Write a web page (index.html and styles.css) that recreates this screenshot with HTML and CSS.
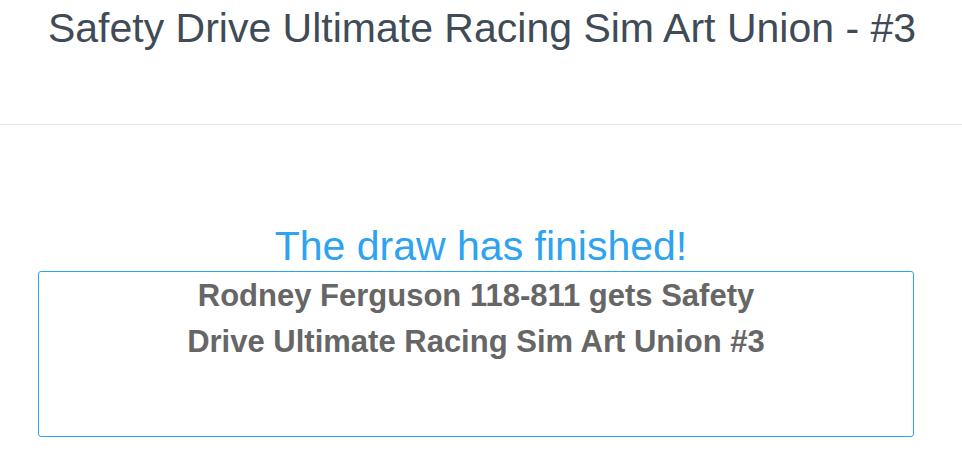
FILE: index.html
```html
<!DOCTYPE html>
<html>
<head>
<meta charset="utf-8">
<link rel="stylesheet" href="styles.css">
</head>
<body>
<header class="page-header">
  <h1 class="title">Safety Drive Ultimate Racing Sim Art Union - #3</h1>
</header>
<main class="content">
  <h2 class="status">The draw has finished!</h2>
  <div class="result-box">
    <h3 class="winner">Rodney Ferguson 118-811 gets Safety Drive Ultimate Racing Sim Art Union #3</h3>
  </div>
</main>
</body>
</html>
```
FILE: styles.css
```css
html, body {
  margin: 0;
  padding: 0;
  background: #fff;
  font-family: "Liberation Sans", Arial, sans-serif;
}
.page-header {
  height: 124px;
  border-bottom: 1px solid #e6e6e6;
  display: flex;
  justify-content: center;
}
.title {
  margin: 5px 0 0 2px;
  font-size: 41px;
  font-weight: normal;
  line-height: 46px;
  color: #3f4b56;
}
.content {
  padding-top: 96px;
  display: flex;
  flex-direction: column;
  align-items: center;
}
.status {
  margin: 0;
  font-size: 41px;
  line-height: 50px;
  font-weight: normal;
  color: #2ea3f2;
}
.result-box {
  box-sizing: border-box;
  width: 876px;
  height: 166px;
  margin-left: -10px;
  border: 1px solid #2ea3f2;
  border-radius: 3px;
  display: flex;
  justify-content: center;
}
.winner {
  margin: 1px 0 0 0;
  width: 620px;
  text-align: center;
  font-size: 31px;
  line-height: 46px;
  font-weight: bold;
  color: #666;
}
```
